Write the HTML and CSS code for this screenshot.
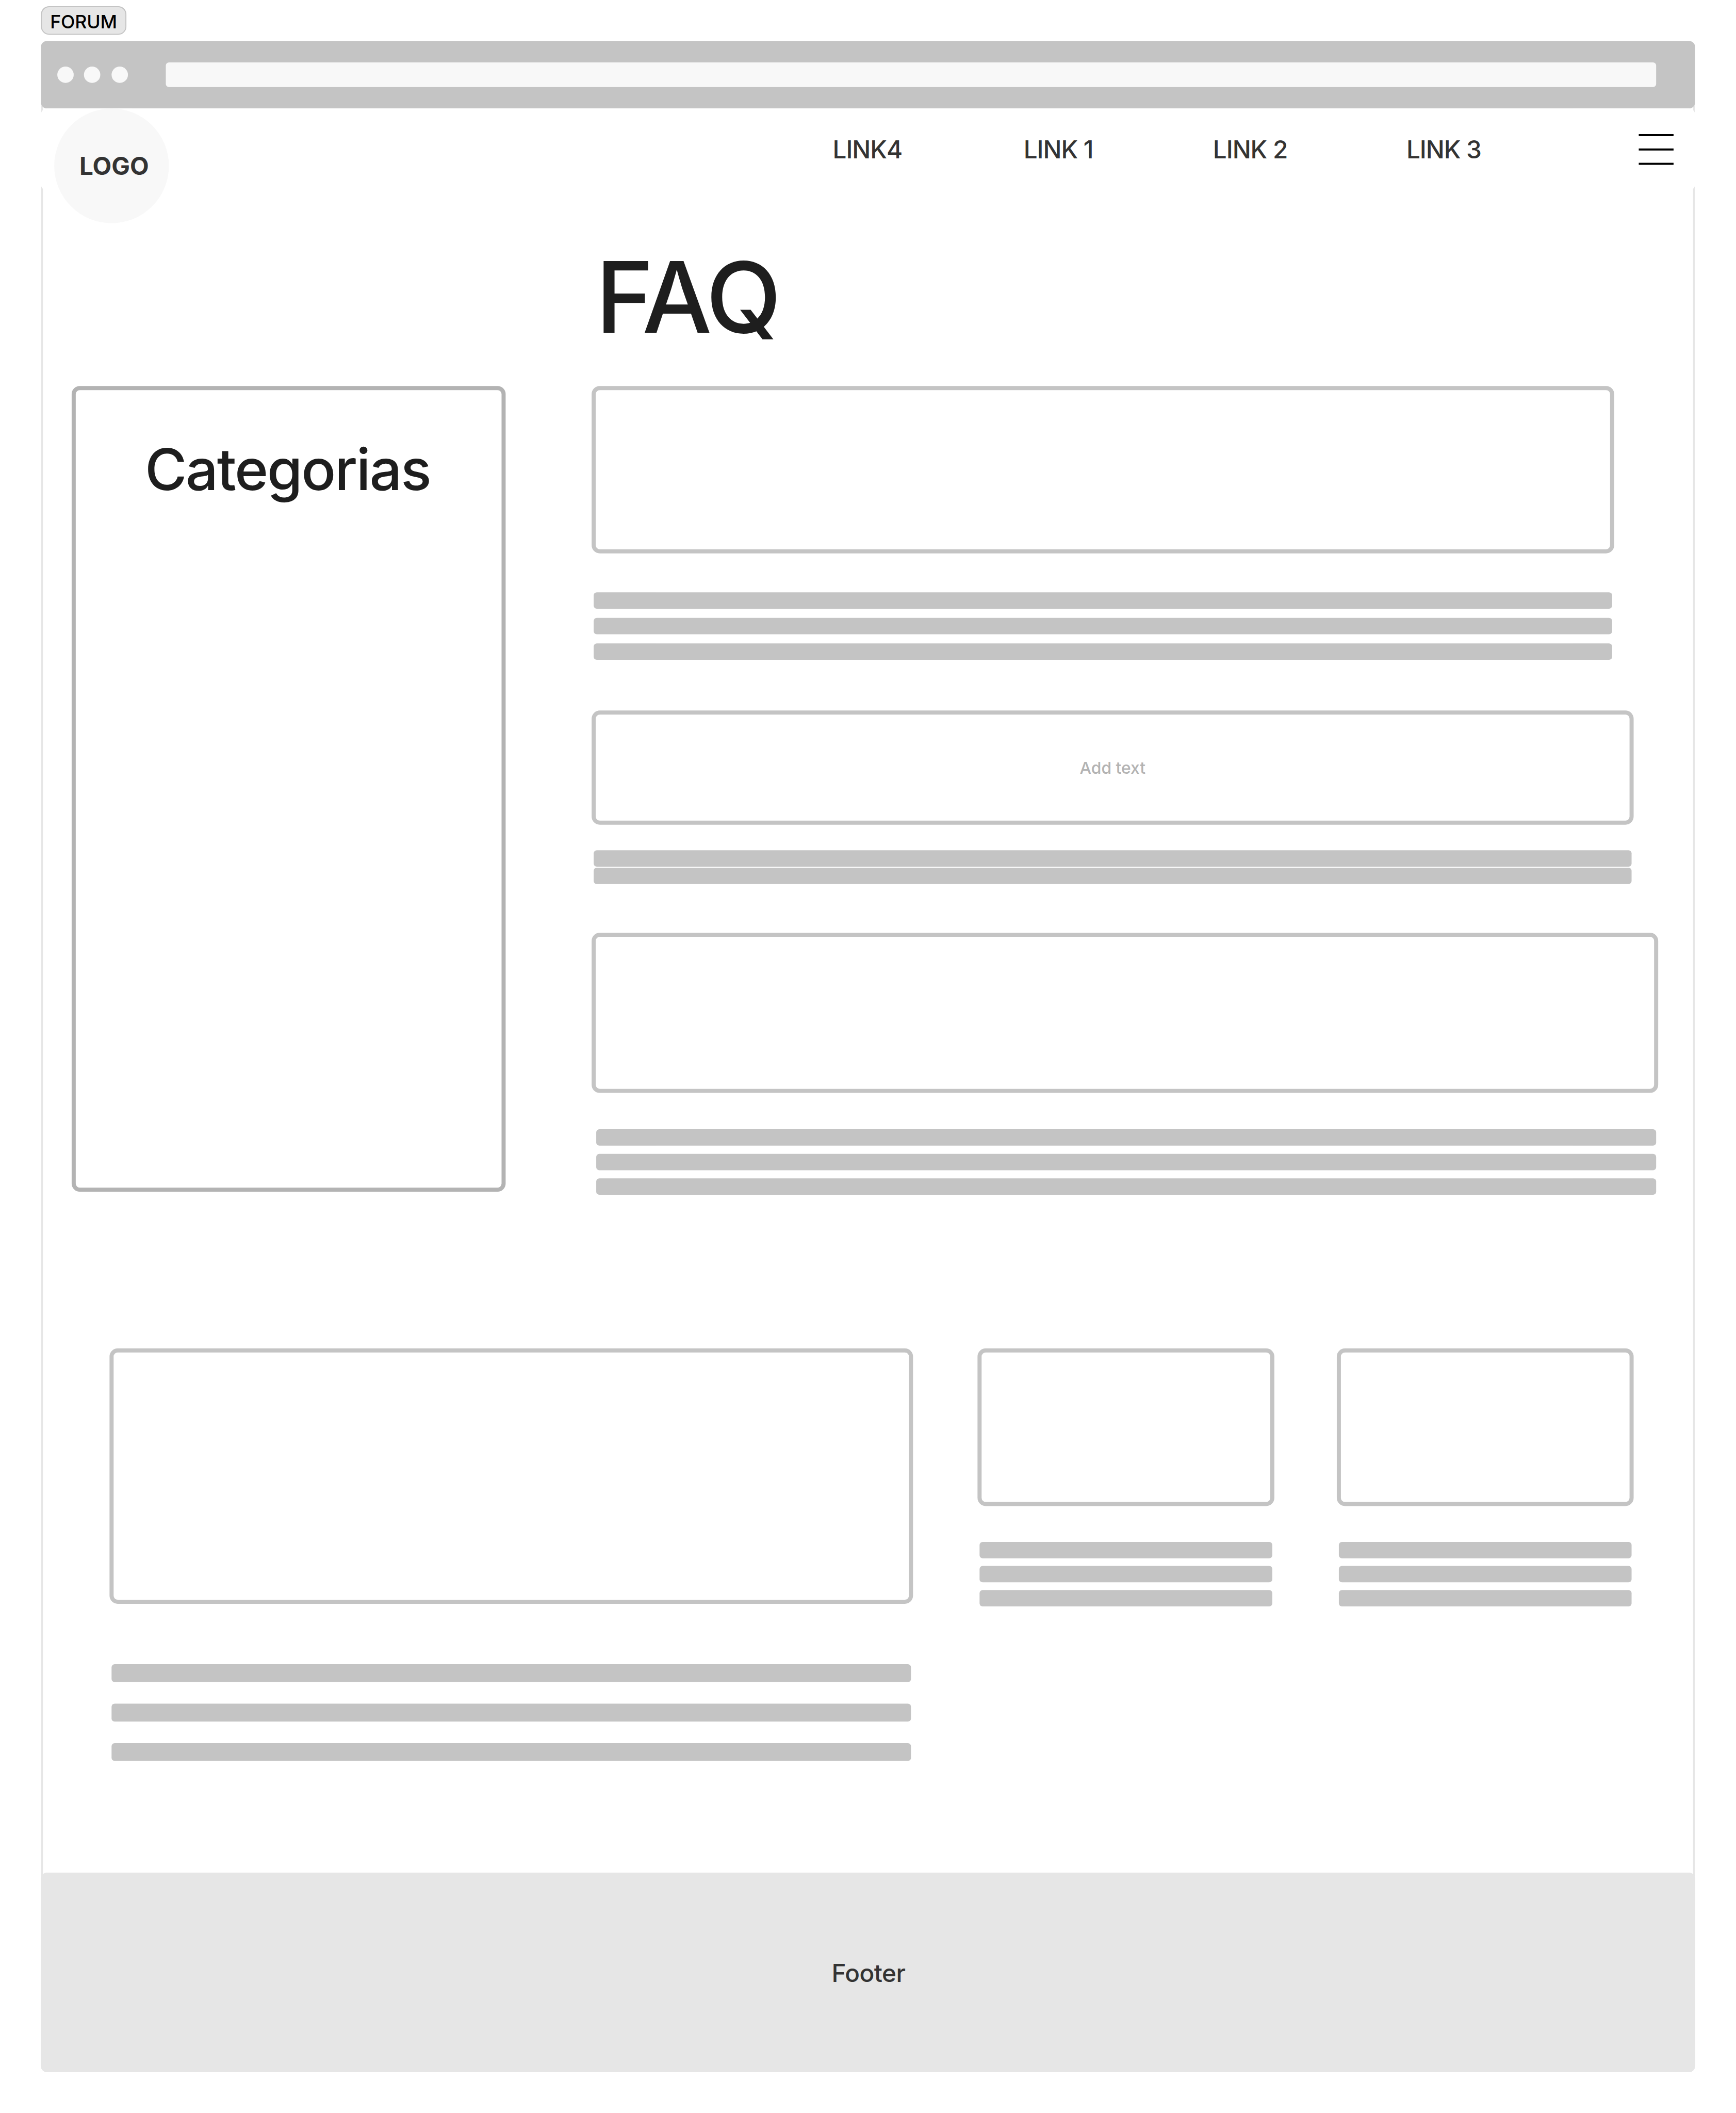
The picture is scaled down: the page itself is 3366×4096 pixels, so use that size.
FILE: index.html
```html
<!DOCTYPE html>
<html lang="pt">
<head>
<meta charset="utf-8">
<title>FORUM</title>
<link rel="stylesheet" href="styles.css">
</head>
<body>
<div class="board">
  <span class="tag">FORUM</span>
  <div class="frame">
    <div class="browser-bar">
      <div class="dots"><i></i><i></i><i></i></div>
      <div class="address"></div>
    </div>
    <header class="header">
      <div class="logo"><span>LOGO</span></div>
      <nav class="nav"><a>LINK4</a><a>LINK 1</a><a>LINK 2</a><a>LINK 3</a></nav>
      <div class="menu"><i></i><i></i><i></i></div>
    </header>
    <main class="main">
      <h1 class="title">FAQ</h1>
      <div class="columns">
        <aside class="box sidebar"><h2>Categorias</h2></aside>
        <div class="faq">
          <section class="entry entry-first">
            <div class="box"></div>
            <div class="lines"><i></i><i></i><i></i></div>
          </section>
          <section class="entry entry-second">
            <div class="box">Add text</div>
            <div class="lines"><i></i><i></i></div>
          </section>
          <section class="entry entry-third">
            <div class="box"></div>
            <div class="lines"><i></i><i></i><i></i></div>
          </section>
        </div>
      </div>
      <div class="cards">
        <section class="card card-large">
          <div class="box"></div>
          <div class="lines"><i></i><i></i><i></i></div>
        </section>
        <section class="card">
          <div class="box"></div>
          <div class="lines"><i></i><i></i><i></i></div>
        </section>
        <section class="card">
          <div class="box"></div>
          <div class="lines"><i></i><i></i><i></i></div>
        </section>
      </div>
    </main>
    <footer class="footer">Footer</footer>
  </div>
</div>
</body>
</html>
```
FILE: styles.css
```css
* { box-sizing: border-box; margin: 0; }

html, body {
  width: 3366px;
  height: 4096px;
  overflow: hidden;
  background: #fff;
}

.board {
  width: 3392px;
  height: 4128px;
  padding: 12px 80px 80px;
  transform: scale(0.99233);
  transform-origin: 0 0;
  font-family: Inter, "Liberation Sans", sans-serif;
  font-size: 48px;
  font-weight: 450;
  line-height: 1.2;
  color: #333;
}

.tag {
  display: flex;
  align-items: center;
  width: 167px;
  height: 56px;
  padding: 6px 0 0 16px;
  border: 2px solid #c4c4c4;
  border-radius: 16px;
  background: #e6e6e6;
  color: #000;
  font-size: 36px;
  letter-spacing: -0.006em;
}

.frame {
  display: flex;
  flex-direction: column;
  width: 3232px;
  height: 3968px;
  margin-top: 12px;
  border-radius: 12px;
  box-shadow: inset 0 0 0 4px #e6e6e6;
}

.browser-bar {
  display: flex;
  align-items: center;
  gap: 74px;
  height: 132px;
  padding: 0 76px 0 32px;
  border-radius: 12px;
  background: #c4c4c4;
}

.dots {
  display: flex;
  justify-content: space-between;
  width: 138px;
}

.dots i {
  width: 32px;
  height: 32px;
  border-radius: 50%;
  background: #f8f8f8;
}

.dots i:first-child { margin-right: -2px; }

.address {
  flex: 1;
  height: 48px;
  border-radius: 6px;
  background: #f8f8f8;
}

.header {
  display: flex;
  align-items: flex-start;
  height: 160px;
  padding-left: 26px;
  border-radius: 12px;
  background: #fff;
}

.logo {
  display: flex;
  align-items: center;
  justify-content: center;
  flex: none;
  width: 224px;
  height: 224px;
  padding: 2px 0 0 10px;
  border-radius: 50%;
  background: #f8f8f8;
  font-weight: 700;
}

.nav {
  display: grid;
  grid-template-columns: 373px 370px 378px 300px;
  margin: 51px 0 0 1297px;
  letter-spacing: -0.022em;
}

.menu {
  display: flex;
  flex-direction: column;
  gap: 24px;
  margin: 50px 0 0 154px;
}

.menu i {
  width: 68px;
  height: 4px;
  background: #000;
}

.main {
  display: flex;
  flex-direction: column;
  flex: 1;
}

.title {
  height: 382px;
  padding: 93px 0 0 1084px;
  color: #1e1e1e;
  font-size: 192px;
  font-weight: 500;
  letter-spacing: -0.025em;
}

.columns {
  display: flex;
  gap: 168px;
  height: 1880px;
  padding-left: 60px;
}

.box {
  border: 8px solid #c4c4c4;
  border-radius: 16px;
  background: #fff;
}

.sidebar {
  width: 848px;
  height: 1574px;
  padding: 87px 4px 0 0;
  border-color: #b3b3b3;
  color: #1e1e1e;
  text-align: center;
}

.sidebar h2 {
  font-size: 112px;
  font-weight: 500;
  letter-spacing: -0.022em;
}

.lines {
  display: flex;
  flex-direction: column;
  padding: 0 4px;
}

.lines i {
  height: 32px;
  border-radius: 6px;
  background: #c4c4c4;
}

.entry-first { width: 1998px; height: 633.8px; }
.entry-first .box { height: 327px; }
.entry-first .lines { gap: 18.15px; margin-top: 76px; }

.entry-second { width: 2036px; height: 434.4px; }
.entry-second .box {
  display: flex;
  align-items: center;
  justify-content: center;
  height: 223.2px;
  padding-top: 4px;
  color: #b3b3b3;
  font-size: 32px;
}
.entry-second .lines { gap: 1.8px; margin-top: 50px; }

.entry-third { width: 2084px; }
.entry-third .box { height: 312.6px; }
.entry-third .lines {
  gap: 15.9px;
  margin-top: 71.6px;
  padding-left: 9px;
}

.cards {
  display: flex;
  padding-left: 134px;
}

.card { width: 580px; }
.card + .card { margin-left: 122px; }
.card .box { height: 308px; }
.card .lines { gap: 15px; margin-top: 70.2px; }

.card-large { width: 1570px; }
.card-large + .card { margin-left: 126px; }
.card-large .box { height: 498.5px; }
.card-large .lines { gap: 42px; margin-top: 118.5px; }
.card-large .lines i { height: 35px; }

.footer {
  display: flex;
  align-items: center;
  justify-content: center;
  height: 389.7px;
  padding: 3px 0 0 2px;
  border-radius: 12px;
  background: #e6e6e6;
  letter-spacing: -0.01em;
}
```
